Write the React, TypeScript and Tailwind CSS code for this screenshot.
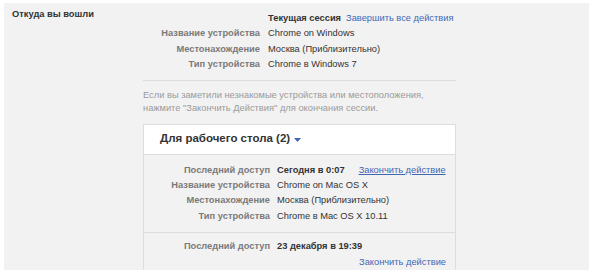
import React from 'react';

const font = { fontFamily: '"Liberation Sans", Arial, sans-serif' };

const topRows = [
  { label: 'Название устройства', value: 'Chrome on Windows' },
  { label: 'Местонахождение', value: 'Москва (Приблизительно)' },
  { label: 'Тип устройства', value: 'Chrome в Windows 7' },
];

const deviceRows = [
  { label: 'Название устройства', value: 'Chrome on Mac OS X' },
  { label: 'Местонахождение', value: 'Москва (Приблизительно)' },
  { label: 'Тип устройства', value: 'Chrome в Mac OS X 10.11' },
];

export default function App() {
  return (
    <div className="w-[600px] h-[270px] bg-white overflow-hidden" style={font}>
      <div className="ml-[4px] mt-[3px] w-[585px] h-[267px] bg-[#f2f2f2] flex text-[9.3px] leading-[15.4px] text-[#333]">
        <div className="w-[139px] pl-[8px] pt-[4px] font-bold text-[#333]">Откуда вы вошли</div>

        <div className="w-[313px] pt-[8px]">
          {/* current session */}
          <div className="grid grid-cols-[117px_1fr] gap-x-[8px]">
            <div></div>
            <div>
              <span className="font-bold">Текущая сессия</span>
              <span className="ml-[5px] text-[#4267b2]">Завершить все действия</span>
            </div>
            {topRows.map((r) => (
              <React.Fragment key={r.label}>
                <div className="text-right font-bold text-[#7a7a7a]">{r.label}</div>
                <div>{r.value}</div>
              </React.Fragment>
            ))}
          </div>

          <div className="mt-[7px] border-t border-[#dcdcdc]"></div>

          <div className="mt-[8px] text-[#9a9a9a] leading-[13px]">
            Если вы заметили незнакомые устройства или местоположения,
            <br />
            нажмите "Закончить Действия" для окончания сессии.
          </div>

          {/* desktop sessions */}
          <div className="mt-[9px] border border-[#dddddd] h-[200px]">
            <div className="bg-white h-[30px] pl-[16px] flex items-center border-b border-[#dddddd]">
              <span className="text-[11.5px] font-bold text-[#333]">Для рабочего стола (2)</span>
              <svg width="7" height="4" viewBox="0 0 7 4" className="ml-[4px] mt-[2px]">
                <path d="M0 0h7L3.5 4z" fill="#4267b2" />
              </svg>
            </div>

            <div className="pt-[8px] pb-[8px] grid grid-cols-[126px_1fr] gap-x-[7px]">
              <div className="text-right font-bold text-[#7a7a7a]">Последний доступ</div>
              <div>
                <span className="font-bold">Сегодня в 0:07</span>
                <span className="ml-[14px] text-[#4267b2] underline">Закончить действие</span>
              </div>
              {deviceRows.map((r) => (
                <React.Fragment key={r.label}>
                  <div className="text-right font-bold text-[#7a7a7a]">{r.label}</div>
                  <div>{r.value}</div>
                </React.Fragment>
              ))}
            </div>

            <div className="border-t border-[#dcdcdc] pt-[6px] pr-[9px]">
              <div className="grid grid-cols-[126px_1fr] gap-x-[7px]">
                <div className="text-right font-bold text-[#7a7a7a]">Последний доступ</div>
                <div className="font-bold">23 декабря в 19:39</div>
              </div>
              <div className="text-right text-[#4267b2]">Закончить действие</div>
            </div>
          </div>
        </div>
      </div>
    </div>
  );
}
